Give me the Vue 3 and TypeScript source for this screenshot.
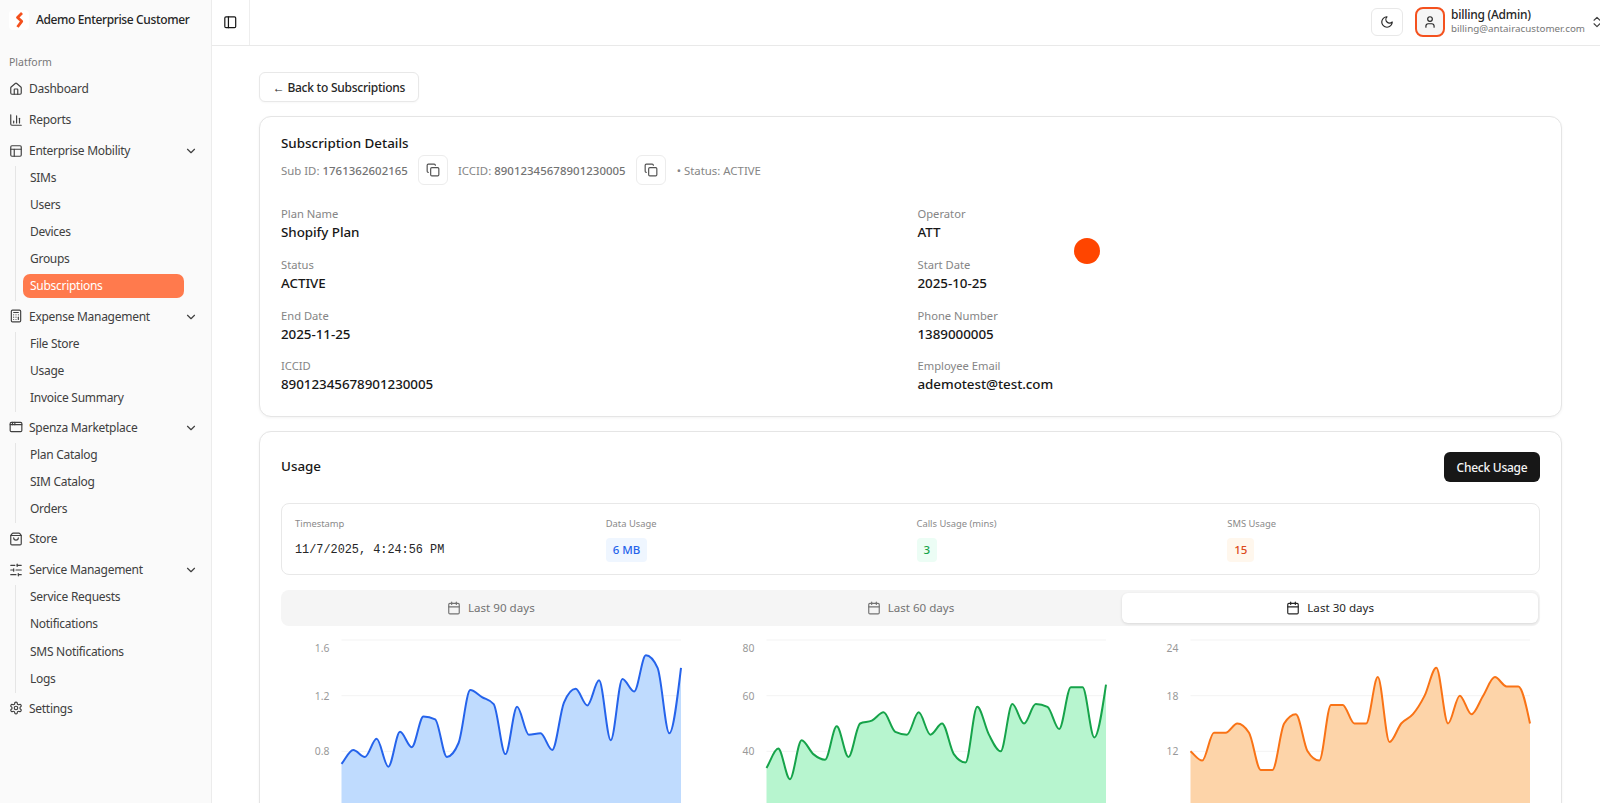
<template>
  <div class="app">
    <aside class="sidebar">
      <div class="brand">
        <div class="logo">
          <svg viewBox="0 0 20 20" width="20" height="20" fill="none" stroke="#f4511e" stroke-width="2.8" stroke-linejoin="round">
            <path d="M13 3 8.5 7.5l4.2 3.8L8.5 17" />
          </svg>
        </div>
        <span class="brand-name">Ademo Enterprise Customer</span>
      </div>
      <div class="nav-label">Platform</div>
      <nav class="nav">
        <template v-for="item in nav" :key="item.label">
          <div class="nav-row">
            <Icon :name="item.icon" class="nav-icon" />
            <span>{{ item.label }}</span>
            <Icon v-if="item.children" name="chevronDown" class="nav-chevron" />
          </div>
          <div v-if="item.children" class="sub-list">
            <div
              v-for="child in item.children"
              :key="child"
              class="sub-item"
              :class="{ active: child === 'Subscriptions' }"
            >
              {{ child }}
            </div>
          </div>
        </template>
      </nav>
    </aside>

    <div class="page">
      <header class="topbar">
        <div class="toggle-cell"><Icon name="panelLeft" class="toggle-icon" /></div>
        <div class="topbar-right">
          <button class="moon-btn"><Icon name="moon" class="top-icon" /></button>
          <div class="avatar"><Icon name="user" class="top-icon" /></div>
          <div class="user-text">
            <div class="user-name">billing (Admin)</div>
            <div class="user-mail">billing@antairacustomer.com</div>
          </div>
          <Icon name="chevronsUpDown" class="user-chevron" />
        </div>
      </header>

      <main class="content">
        <button class="back-btn">← Back to Subscriptions</button>

        <section class="card details">
          <h2 class="card-title">Subscription Details</h2>
          <div class="meta-row">
            <span>Sub ID: <b>1761362602165</b></span>
            <button class="copy-btn"><Icon name="copy" class="copy-icon" /></button>
            <span>ICCID: <b>89012345678901230005</b></span>
            <button class="copy-btn"><Icon name="copy" class="copy-icon" /></button>
            <span class="meta-status">• Status: ACTIVE</span>
          </div>
          <div class="fields">
            <div v-for="f in fields" :key="f.label" class="field">
              <div class="field-label">{{ f.label }}</div>
              <div class="field-value">{{ f.value }}</div>
            </div>
          </div>
        </section>

        <section class="card usage">
          <div class="usage-head">
            <h2 class="card-title">Usage</h2>
            <button class="check-btn">Check Usage</button>
          </div>

          <div class="usage-box">
            <div class="usage-col">
              <div class="usage-label">Timestamp</div>
              <div class="timestamp">11/7/2025, 4:24:56 PM</div>
            </div>
            <div v-for="b in badges" :key="b.label" class="usage-col">
              <div class="usage-label">{{ b.label }}</div>
              <span class="badge" :class="b.tone">{{ b.value }}</span>
            </div>
          </div>

          <div class="tabs">
            <div
              v-for="t in tabs"
              :key="t"
              class="tab"
              :class="{ selected: t === 'Last 30 days' }"
            >
              <Icon name="calendar" class="tab-icon" />
              {{ t }}
            </div>
          </div>

          <div class="charts">
            <svg v-for="c in charts" :key="c.stroke" class="chart" viewBox="0 0 410 250" width="410" height="250">
              <line
                v-for="t in c.ticks"
                :key="t.label"
                :x1="plotLeft"
                :x2="plotLeft + plotWidth"
                :y1="t.y"
                :y2="t.y"
                stroke="#f3f3f3"
              />
              <text
                v-for="t in c.ticks"
                :key="'l' + t.label"
                class="tick"
                :x="plotLeft - 12"
                :y="t.labelY"
                text-anchor="end"
              >{{ t.label }}</text>
              <path :d="c.area" :fill="c.fill" />
              <path :d="c.line" fill="none" :stroke="c.stroke" stroke-width="2" />
            </svg>
          </div>
        </section>
      </main>
    </div>

    <div class="pointer-dot"></div>
  </div>
</template>

<script setup lang="ts">
import { h } from 'vue';

const rect = (x: number, y: number, w: number, hh: number, r: number) =>
  `M${x + r} ${y}h${w - 2 * r}a${r} ${r} 0 0 1 ${r} ${r}v${hh - 2 * r}a${r} ${r} 0 0 1 -${r} ${r}h-${w - 2 * r}a${r} ${r} 0 0 1 -${r} -${r}v-${hh - 2 * r}a${r} ${r} 0 0 1 ${r} -${r}z`;

const icons: Record<string, string[]> = {
  home: [
    'M15 21v-8a1 1 0 0 0-1-1h-4a1 1 0 0 0-1 1v8',
    'M3 10a2 2 0 0 1 .709-1.528l7-5.999a2 2 0 0 1 2.582 0l7 5.999A2 2 0 0 1 21 10v9a2 2 0 0 1-2 2H5a2 2 0 0 1-2-2z',
  ],
  chart: ['M3 3v16a2 2 0 0 0 2 2h16', 'M18 17V9', 'M13 17V5', 'M8 17v-3'],
  panels: [rect(3, 3, 18, 18, 2), 'M3 9h18', 'M9 21V9'],
  calculator: [
    rect(4, 2, 16, 20, 2),
    'M8 6h8',
    'M16 14v4',
    'M16 10h.01',
    'M12 10h.01',
    'M8 10h.01',
    'M12 14h.01',
    'M8 14h.01',
    'M12 18h.01',
    'M8 18h.01',
  ],
  window: [rect(2, 4, 20, 16, 2), 'M10 4v4', 'M2 8h20', 'M6 4v4'],
  bag: [
    'M16 10a4 4 0 0 1-8 0',
    'M3.103 6.034h17.794',
    'M3.4 5.467a2 2 0 0 0-.4 1.2V20a2 2 0 0 0 2 2h14a2 2 0 0 0 2-2V6.667a2 2 0 0 0-.4-1.2l-2-2.667A2 2 0 0 0 17 2H7a2 2 0 0 0-1.6.8z',
  ],
  sliders: [
    'M21 4h-7',
    'M10 4H3',
    'M21 12h-9',
    'M8 12H3',
    'M21 20h-5',
    'M12 20H3',
    'M14 2v4',
    'M8 10v4',
    'M16 18v4',
  ],
  settings: [
    'M12.22 2h-.44a2 2 0 0 0-2 2v.18a2 2 0 0 1-1 1.73l-.43.25a2 2 0 0 1-2 0l-.15-.08a2 2 0 0 0-2.73.73l-.22.38a2 2 0 0 0 .73 2.73l.15.1a2 2 0 0 1 1 1.72v.51a2 2 0 0 1-1 1.74l-.15.09a2 2 0 0 0-.73 2.73l.22.38a2 2 0 0 0 2.73.73l.15-.08a2 2 0 0 1 2 0l.43.25a2 2 0 0 1 1 1.73V20a2 2 0 0 0 2 2h.44a2 2 0 0 0 2-2v-.18a2 2 0 0 1 1-1.73l.43-.25a2 2 0 0 1 2 0l.15.08a2 2 0 0 0 2.73-.73l.22-.39a2 2 0 0 0-.73-2.73l-.15-.08a2 2 0 0 1-1-1.74v-.5a2 2 0 0 1 1-1.74l.15-.09a2 2 0 0 0 .73-2.73l-.22-.38a2 2 0 0 0-2.73-.73l-.15.08a2 2 0 0 1-2 0l-.43-.25a2 2 0 0 1-1-1.73V4a2 2 0 0 0-2-2z',
    'M15 12a3 3 0 1 1-6 0a3 3 0 1 1 6 0z',
  ],
  chevronDown: ['m6 9 6 6 6-6'],
  chevronsUpDown: ['m7 15 5 5 5-5', 'm7 9 5-5 5 5'],
  panelLeft: [rect(3, 3, 18, 18, 2), 'M9 3v18'],
  moon: ['M12 3a6 6 0 0 0 9 9 9 9 0 1 1-9-9Z'],
  user: ['M19 21v-2a4 4 0 0 0-4-4H9a4 4 0 0 0-4 4v2', 'M16 7a4 4 0 1 1-8 0a4 4 0 1 1 8 0z'],
  copy: [rect(8, 8, 14, 14, 2), 'M4 16c-1.1 0-2-.9-2-2V4c0-1.1.9-2 2-2h10c1.1 0 2 .9 2 2'],
  calendar: ['M8 2v4', 'M16 2v4', rect(3, 4, 18, 18, 2), 'M3 10h18'],
};

const Icon = (props: { name: string }) =>
  h(
    'svg',
    {
      viewBox: '0 0 24 24',
      fill: 'none',
      stroke: 'currentColor',
      'stroke-width': 2,
      'stroke-linecap': 'round',
      'stroke-linejoin': 'round',
    },
    icons[props.name].map((d) => h('path', { d })),
  );
Icon.props = ['name'];

const nav = [
  { label: 'Dashboard', icon: 'home' },
  { label: 'Reports', icon: 'chart' },
  {
    label: 'Enterprise Mobility',
    icon: 'panels',
    children: ['SIMs', 'Users', 'Devices', 'Groups', 'Subscriptions'],
  },
  {
    label: 'Expense Management',
    icon: 'calculator',
    children: ['File Store', 'Usage', 'Invoice Summary'],
  },
  {
    label: 'Spenza Marketplace',
    icon: 'window',
    children: ['Plan Catalog', 'SIM Catalog', 'Orders'],
  },
  { label: 'Store', icon: 'bag' },
  {
    label: 'Service Management',
    icon: 'sliders',
    children: ['Service Requests', 'Notifications', 'SMS Notifications', 'Logs'],
  },
  { label: 'Settings', icon: 'settings' },
];

const fields = [
  { label: 'Plan Name', value: 'Shopify Plan' },
  { label: 'Operator', value: 'ATT' },
  { label: 'Status', value: 'ACTIVE' },
  { label: 'Start Date', value: '2025-10-25' },
  { label: 'End Date', value: '2025-11-25' },
  { label: 'Phone Number', value: '1389000005' },
  { label: 'ICCID', value: '89012345678901230005' },
  { label: 'Employee Email', value: 'ademotest@test.com' },
];

const badges = [
  { label: 'Data Usage', value: '6 MB', tone: 'blue' },
  { label: 'Calls Usage (mins)', value: '3', tone: 'green' },
  { label: 'SMS Usage', value: '15', tone: 'orange' },
];

const tabs = ['Last 90 days', 'Last 60 days', 'Last 30 days'];

const plotLeft = 60.5;
const plotWidth = 339.5;
const gridTop = 6;
const gridStep = 55.67;
const chartBottom = 250;

// same shape as d3 curveMonotoneX, which is what the reference's chart lib draws
const monotonePath = (pts: [number, number][]) => {
  const n = pts.length;
  const slopes: number[] = [];
  for (let i = 0; i < n - 1; i++) {
    slopes.push((pts[i + 1][1] - pts[i][1]) / (pts[i + 1][0] - pts[i][0]));
  }
  const tangents: number[] = [slopes[0]];
  for (let i = 1; i < n - 1; i++) {
    const a = slopes[i - 1];
    const b = slopes[i];
    const p = (a + b) / 2;
    tangents.push((Math.sign(a) + Math.sign(b)) * Math.min(Math.abs(a), Math.abs(b), 0.5 * Math.abs(p)));
  }
  tangents.push((3 * slopes[n - 2] - tangents[n - 2]) / 2);
  tangents[0] = (3 * slopes[0] - tangents[0]) / 2;
  let d = `M${pts[0][0]} ${pts[0][1]}`;
  for (let i = 0; i < n - 1; i++) {
    const dx = (pts[i + 1][0] - pts[i][0]) / 3;
    d += `C${pts[i][0] + dx} ${pts[i][1] + dx * tangents[i]} ${pts[i + 1][0] - dx} ${pts[i + 1][1] - dx * tangents[i + 1]} ${pts[i + 1][0]} ${pts[i + 1][1]}`;
  }
  return d;
};

const makeChart = (data: number[], top: number, step: number, labels: string[], stroke: string, fill: string) => {
  const pts = data.map((v, i): [number, number] => [
    plotLeft + (plotWidth * i) / (data.length - 1),
    gridTop + ((top - v) / step) * gridStep,
  ]);
  const line = monotonePath(pts);
  const area = `${line}L${plotLeft + plotWidth} ${chartBottom}L${plotLeft} ${chartBottom}Z`;
  const ticks = labels.map((label, i) => ({
    label,
    y: gridTop + i * gridStep,
    labelY: gridTop + i * gridStep + (i === 0 ? 12 : 4),
  }));
  return { line, area, ticks, stroke, fill };
};

const charts = [
  makeChart(
    [0.71, 0.81, 0.76, 0.89, 0.69, 0.94, 0.83, 1.05, 1.03, 0.76, 0.86, 1.24, 1.19, 1.14, 0.78, 1.12, 0.92, 0.93, 0.81, 1.15, 1.25, 1.13, 1.31, 0.88, 1.32, 1.23, 1.49, 1.4, 0.93, 1.4],
    1.6, 0.4, ['1.6', '1.2', '0.8'], '#2563eb', '#bfdbfe',
  ),
  makeChart(
    [34, 41, 30, 44, 39, 37, 49, 38, 50, 51, 54, 47, 46, 54, 46, 50, 39, 36, 56, 46, 40, 57, 50, 57, 56, 48, 63, 63, 45, 64],
    80, 20, ['80', '60', '40'], '#16a34a', '#b7f5cf',
  ),
  makeChart(
    [12, 11, 14, 14, 15, 14, 10, 10, 15, 16, 12, 11, 17, 17, 15, 15, 20, 13, 15, 16, 18, 21, 15, 18, 16, 18, 20, 19, 19, 15],
    24, 6, ['24', '18', '12'], '#f97316', '#fdd4a9',
  ),
];
</script>

<style>
html,
body {
  margin: 0;
  height: 100%;
  overflow: hidden;
  background: #fff;
}
</style>

<style scoped>
.app {
  display: flex;
  height: 803px;
  overflow: hidden;
  font-family: "Noto Sans", "Open Sans", sans-serif;
  color: #171717;
  position: relative;
}

button {
  font-family: inherit;
}

/* sidebar */
.sidebar {
  width: 212px;
  flex-shrink: 0;
  box-sizing: border-box;
  background: #fafafa;
  border-right: 1px solid #ececec;
}

.brand {
  display: flex;
  align-items: center;
  height: 39px;
  padding-left: 9px;
  gap: 7px;
}

.logo {
  width: 20px;
  height: 20px;
  background: #fff;
  border-radius: 4px;
}

.brand-name {
  font-size: 12px;
  font-weight: 500;
  letter-spacing: -0.37px;
  color: #262626;
  white-space: nowrap;
}

.nav-label {
  font-size: 10.5px;
  color: #777;
  margin: 15px 0 3px 9px;
  line-height: 16px;
}

.nav {
  display: flex;
  flex-direction: column;
}

.nav-row {
  display: flex;
  align-items: center;
  height: 31px;
  flex-shrink: 0;
  padding-left: 9px;
  font-size: 12px;
  letter-spacing: -0.28px;
  color: #404040;
  position: relative;
}

.nav-icon {
  width: 14px;
  height: 14px;
  margin-right: 6px;
  flex-shrink: 0;
}

.nav-chevron {
  width: 14px;
  height: 14px;
  position: absolute;
  left: 184px;
  top: 9px;
}

.sub-list {
  display: flex;
  flex-direction: column;
  gap: 3.1px;
  margin-left: 15px;
  padding: 0 0 2.2px 7px;
  border-left: 1px solid #e5e5e5;
  width: 161px;
}

.sub-item {
  height: 24px;
  line-height: 24px;
  padding-left: 7px;
  border-radius: 7px;
  font-size: 12px;
  letter-spacing: -0.28px;
  color: #404040;
}

.sub-item.active {
  background: #ff7a4d;
  color: #fff;
}

/* top bar */
.page {
  flex: 1;
  min-width: 0;
  display: flex;
  flex-direction: column;
}

.topbar {
  height: 46px;
  flex-shrink: 0;
  box-sizing: border-box;
  display: flex;
  border-bottom: 1px solid #e9e9e9;
}

.toggle-cell {
  width: 38px;
  box-sizing: border-box;
  border-right: 1px solid #eee;
  display: flex;
  align-items: center;
  justify-content: center;
}

.toggle-icon {
  width: 14.5px;
  height: 14.5px;
}

.topbar-right {
  margin-left: auto;
  margin-right: -4px;
  display: flex;
  align-items: center;
  flex-shrink: 0;
  padding-bottom: 2px;
}

.moon-btn {
  width: 32px;
  height: 28px;
  padding: 0;
  flex-shrink: 0;
  background: #fff;
  border: 1px solid #e8e8e8;
  border-radius: 6px;
  display: flex;
  align-items: center;
  justify-content: center;
  color: #262626;
}

.top-icon {
  width: 14px;
  height: 14px;
}

.avatar {
  width: 30px;
  height: 30px;
  flex-shrink: 0;
  box-sizing: border-box;
  margin-left: 12px;
  margin-right: 6px;
  border: 2px solid #f4511e;
  border-radius: 8px;
  background: #f5f5f5;
  display: flex;
  align-items: center;
  justify-content: center;
  color: #262626;
}

.user-text {
  width: 139px;
  flex-shrink: 0;
  white-space: nowrap;
  margin-top: -1px;
}

.user-name {
  font-size: 12px;
  font-weight: 500;
  letter-spacing: -0.25px;
  line-height: 15px;
  color: #262626;
}

.user-mail {
  font-size: 9.8px;
  line-height: 13px;
  color: #777;
}

.user-chevron {
  width: 14px;
  height: 14px;
  flex-shrink: 0;
  color: #404040;
}

/* main */
.content {
  flex: 1;
  min-height: 0;
  overflow: hidden;
  padding: 26px 38px 0 47px;
  box-sizing: border-box;
}

.back-btn {
  display: block;
  width: 160px;
  height: 30px;
  padding: 0;
  background: #fff;
  border: 1px solid #e8e8e8;
  border-radius: 6px;
  font-size: 12px;
  font-weight: 500;
  letter-spacing: -0.25px;
  color: #262626;
  box-shadow: 0 1px 2px rgba(0, 0, 0, 0.03);
}

.card {
  background: #fff;
  border: 1px solid #e5e5e5;
  border-radius: 12px;
  box-sizing: border-box;
  padding: 0 21px;
  box-shadow: 0 1px 3px rgba(0, 0, 0, 0.05);
}

.details {
  margin-top: 14px;
  height: 301px;
  padding-top: 16px;
}

.card-title {
  margin: 0;
  font-size: 13.4px;
  font-weight: 500;
  line-height: 20px;
  color: #171717;
}

.meta-row {
  display: flex;
  align-items: center;
  gap: 10px;
  margin-top: 2px;
  font-size: 11.4px;
  color: #858585;
}

.meta-row b {
  font-weight: 500;
  letter-spacing: 0.06px;
  color: #737373;
}

.meta-status {
  margin-left: 1px;
}

.copy-btn {
  width: 30px;
  height: 30px;
  padding: 0;
  background: #fff;
  border: 1px solid #ececec;
  border-radius: 6px;
  display: flex;
  align-items: center;
  justify-content: center;
  color: #525252;
}

.copy-icon {
  width: 14px;
  height: 14px;
}

.fields {
  display: grid;
  grid-template-columns: 636.5px 1fr;
  row-gap: 13.8px;
  margin-top: 21px;
}

.field-label {
  font-size: 11.2px;
  line-height: 16px;
  color: #858585;
}

.field-value {
  font-size: 13.4px;
  font-weight: 500;
  line-height: 22px;
  margin-top: -1px;
  letter-spacing: -0.05px;
  color: #171717;
}

.usage {
  margin-top: 14px;
  height: 400px;
}

.usage-head {
  display: flex;
  align-items: center;
  justify-content: space-between;
  height: 30px;
  margin-top: 20px;
}

.usage-head .card-title {
  margin-top: -2px;
}

.check-btn {
  width: 96px;
  height: 30px;
  padding: 0;
  border: 0;
  border-radius: 6px;
  background: #171717;
  color: #f5f5f5;
  font-size: 12px;
  font-weight: 500;
  letter-spacing: -0.25px;
}

.usage-box {
  display: grid;
  grid-template-columns: repeat(4, 1fr);
  column-gap: 12px;
  height: 72px;
  margin-top: 21px;
  padding: 13px 13px 0;
  box-sizing: border-box;
  border: 1px solid #e8e8e8;
  border-radius: 8px;
}

.usage-label {
  font-size: 9.4px;
  line-height: 14px;
  color: #8a8a8a;
}

.timestamp {
  font-family: "Liberation Mono", monospace;
  font-size: 11.85px;
  line-height: 25px;
  margin-top: 7px;
  color: #262626;
}

.badge {
  display: inline-block;
  margin-top: 7px;
  padding: 0 7px;
  height: 24px;
  line-height: 24px;
  border-radius: 4px;
  font-size: 11.5px;
  font-weight: 500;
}

.badge.blue {
  background: #eff6ff;
  color: #2563eb;
}

.badge.green {
  background: #ecfdf5;
  color: #16a34a;
}

.badge.orange {
  background: #fff7ed;
  color: #dc4a1a;
}

.tabs {
  display: grid;
  grid-template-columns: repeat(3, 1fr);
  margin-top: 15px;
  height: 36px;
  box-sizing: border-box;
  background: #f5f5f5;
  border-radius: 8px;
}

.tab {
  display: flex;
  align-items: center;
  justify-content: center;
  gap: 7px;
  margin: 3px 2px;
  padding-bottom: 1px;
  font-size: 11.6px;
  color: #737373;
  border-radius: 6px;
}

.tab.selected {
  background: #fff;
  color: #262626;
  box-shadow: 0 1px 3px rgba(0, 0, 0, 0.12);
}

.tab-icon {
  width: 14px;
  height: 14px;
}

.charts {
  display: flex;
  justify-content: space-between;
  margin-top: 8px;
}

.chart {
  flex-shrink: 0;
}

.tick {
  font-size: 10.4px;
  fill: #999;
}

/* highlighted mouse pointer from the recording */
.pointer-dot {
  position: absolute;
  left: 1074px;
  top: 238px;
  width: 26px;
  height: 26px;
  border-radius: 50%;
  background: #ff4500;
}
</style>
